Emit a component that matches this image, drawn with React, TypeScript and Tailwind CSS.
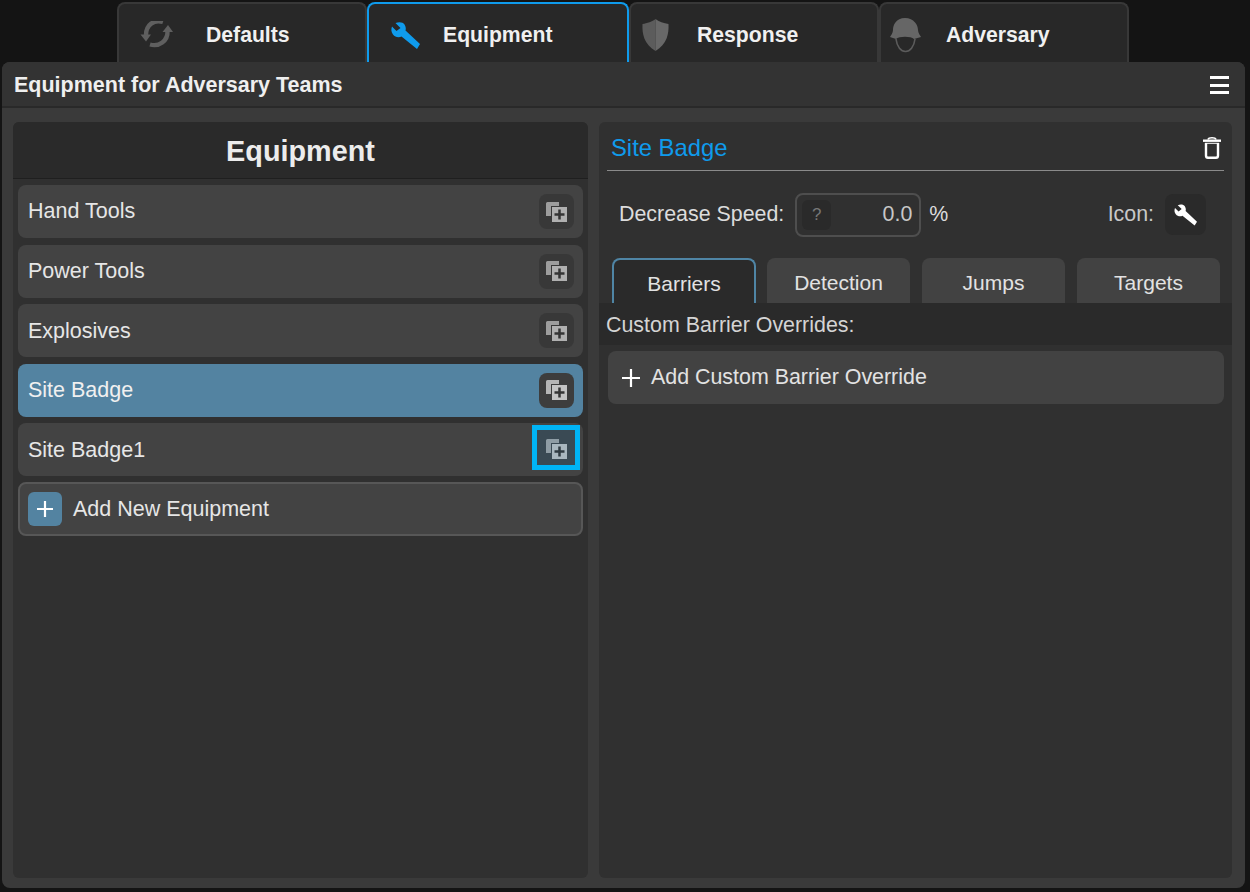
import React from "react";

const equipment = ["Hand Tools", "Power Tools", "Explosives", "Site Badge", "Site Badge1"];

function SyncIcon() {
  return (
    <svg width="33" height="28" viewBox="9 13 33 28" fill="none">
      <path d="M32 14C23 11 15 17 15 27" stroke="#5f5f5f" strokeWidth="4.400" />
      <path d="M9.500 26.500H20L15 33.500Z" fill="#5f5f5f" />
      <path d="M19 36.500C28 39 37 33 36.500 23" stroke="#5f5f5f" strokeWidth="4.400" />
      <path d="M31.500 24H42L37 17Z" fill="#5f5f5f" />
    </svg>
  );
}

function WrenchIcon({ width, height, color }: { width: number; height: number; color: string }) {
  return (
    <svg width={width} height={height} viewBox="9.500 8.500 30 28">
      <path
        d="M14 10C17.500 8.500 21.500 9 23 11.500C24.500 14 24.500 16 24 17.500L38.500 31L35.500 36L20 23.500C17 25 13.500 24 11.500 21.500C9.500 19 9.500 16 10.500 13.500L15 18L19 15Z"
        fill={color}
      />
    </svg>
  );
}

function ShieldIcon() {
  return (
    <svg width="27" height="32" viewBox="0 0 27 32">
      <path d="M13.500 0C10.500 2.500 5 4.500 0.500 5C0 15 2 25 13.500 32Z" fill="#5c5c5c" />
      <path d="M13.500 0C16.500 2.500 22 4.500 26.500 5C27 15 25 25 13.500 32Z" fill="#686868" />
    </svg>
  );
}

function HelmetIcon() {
  return (
    <svg width="33" height="36" viewBox="9 6 33 36" fill="none">
      <path
        d="M25 7C16 7 13 14 13 19C13 22 11 24 10 26L16 28C19 25 31 25 34 28L41 26C40 24 38 22 38 19C38 14 34 7 25 7Z"
        fill="#666666"
      />
      <path d="M16 28C17 36 21 40.500 25.500 40.500C30 40.500 34 36 35 28" stroke="#5c5c5c" strokeWidth="1.600" />
    </svg>
  );
}

function DuplicateIcon({ back, front, plus }: { back: string; front: string; plus: string }) {
  return (
    <svg width="21" height="20" viewBox="0 0 21 20">
      <path d="M1.500 0H13V4H5V14H0V1.500Q0 0 1.500 0Z" fill={back} />
      <rect x="6" y="5" width="15" height="15" fill={front} />
      <path d="M8.500 12.500H18.500M13.500 7.500V17.500" stroke={plus} strokeWidth="2.500" />
    </svg>
  );
}

function TrashIcon() {
  return (
    <svg width="18" height="22" viewBox="0 0 18 22" fill="none">
      <path d="M0 3.700H18" stroke="#ffffff" strokeWidth="2.400" />
      <path d="M5 2.500C5.500 1 7 0.800 9 0.800C11 0.800 12.500 1 13 2.500" stroke="#ffffff" strokeWidth="1.600" />
      <path d="M3 6V18.500Q3 20.800 5 20.800H13Q15 20.800 15 18.500V6" stroke="#ffffff" strokeWidth="2.400" />
      <path d="M2 6.300H16" stroke="#ffffff" strokeWidth="1" />
    </svg>
  );
}

function TopTab({
  label,
  icon,
  active,
  className,
}: {
  label: string;
  icon: React.ReactNode;
  active?: boolean;
  className: string;
}) {
  return (
    <div
      className={`flex h-[60px] items-center rounded-t-[8px] border-2 border-b-0 bg-[#282828] pt-[4px] ${className} ${
        active ? "border-[#0f9bec]" : "border-[#383838]"
      }`}
    >
      {icon}
      <span className="text-[21.200px] font-bold text-[#f0f0f0]">{label}</span>
    </div>
  );
}

function InnerTab({ label, active }: { label: string; active?: boolean }) {
  return (
    <div
      className={`flex h-[45px] items-center justify-center rounded-t-[8px] pt-[4px] text-[21px] text-[#e2e2e2] ${
        active ? "w-[144px] border-2 border-b-0 border-[#4f85a5] bg-[#2a2a2a]" : "w-[143px] bg-[#424242]"
      }`}
    >
      {label}
    </div>
  );
}

export default function App() {
  return (
    <div className="flex h-[892px] w-[1250px] flex-col overflow-hidden bg-[#141414] pt-[2px] font-['Liberation_Sans',Arial,sans-serif]">
      <div className="ml-[117px] flex">
        <TopTab label="Defaults" className="w-[250px] gap-[33px] pl-[21px]" icon={<SyncIcon />} />
        <TopTab
          label="Equipment"
          className="w-[262px] gap-[22px] pl-[22px]"
          active
          icon={<WrenchIcon width={30} height={29} color="#0f9bec" />}
        />
        <TopTab label="Response" className="w-[250px] gap-[28px] pl-[11px]" icon={<ShieldIcon />} />
        <TopTab label="Adversary" className="w-[250px] gap-[24px] pl-[8px]" icon={<HelmetIcon />} />
      </div>

      <div className="ml-[2px] flex h-[826px] w-[1243px] flex-col rounded-[8px] bg-[#3a3a3a]">
        <div className="flex h-[46px] shrink-0 items-center justify-between rounded-t-[8px] border-b-2 border-[#292929] bg-[#333333] pl-[12px] pr-[16px] pt-[2px]">
          <span className="text-[21.500px] font-bold text-[#efefef]">Equipment for Adversary Teams</span>
          <div className="flex w-[19px] flex-col gap-[4.500px]">
            <div className="h-[3px] bg-white" />
            <div className="h-[3px] bg-white" />
            <div className="h-[3px] bg-white" />
          </div>
        </div>

        <div className="flex gap-[11px] pl-[11px] pt-[14px]">
          <div className="flex h-[756px] w-[575px] flex-col rounded-[6px] bg-[#303030]">
            <div className="flex h-[57px] shrink-0 items-center justify-center rounded-t-[6px] border-b border-[#1f1f1f] bg-[#2a2a2a] pt-[3px] text-[28.800px] font-bold text-[#ececec]">
              Equipment
            </div>
            <div className="flex flex-col gap-[6.600px] px-[5px] pt-[6px]">
              {equipment.map((name) => {
                const selected = name === "Site Badge";
                const focused = name === "Site Badge1";
                return (
                  <div
                    key={name}
                    className={`flex h-[53px] items-center justify-between rounded-[8px] pl-[10px] pr-[9px] text-[21.500px] ${
                      selected ? "bg-[#5383a1] text-[#f0f0f0]" : "bg-[#434343] text-[#e6e6e6]"
                    }`}
                  >
                    <span>{name}</span>
                    {focused ? (
                      <div className="-mr-[6px] -mt-[4px] flex h-[45px] w-[48px] items-center justify-center border-[5px] border-[#00b4f6] bg-[#3a4a54] pt-[3px]">
                        <DuplicateIcon back="#8f9da5" front="#a9b7bf" plus="#2f3b42" />
                      </div>
                    ) : (
                      <div
                        className={`flex h-[35px] w-[35px] items-center justify-center rounded-[8px] ${
                          selected ? "bg-[#3d3d3d]" : "bg-[#383838]"
                        }`}
                      >
                        <DuplicateIcon
                          back={selected ? "#b5b5b5" : "#9d9d9d"}
                          front={selected ? "#c4c4c4" : "#b0b0b0"}
                          plus="#353535"
                        />
                      </div>
                    )}
                  </div>
                );
              })}
              <div className="-mt-[1px] flex h-[54px] items-center gap-[11px] rounded-[8px] border-2 border-[#575757] bg-[#434343] pl-[8px] text-[21.500px] text-[#e6e6e6]">
                <div className="flex h-[34px] w-[34px] items-center justify-center rounded-[6px] bg-[#5383a1]">
                  <svg width="16" height="16" viewBox="0 0 16 16">
                    <path d="M0 8H16M8 0V16" stroke="#ffffff" strokeWidth="2.200" />
                  </svg>
                </div>
                <span>Add New Equipment</span>
              </div>
            </div>
          </div>

          <div className="flex h-[756px] w-[633px] flex-col rounded-[6px] bg-[#303030]">
            <div className="mx-[8px] flex h-[49px] shrink-0 items-center justify-between border-b border-[#8a8a8a] pl-[4px] pr-[3px] pt-[4px]">
              <span className="text-[23.800px] text-[#0f9bec]">Site Badge</span>
              <TrashIcon />
            </div>

            <div className="flex h-[87px] shrink-0 items-center justify-between pl-[20px] pr-[26px]">
              <div className="flex items-center text-[21.400px] text-[#dcdcdc]">
                <span>Decrease Speed:</span>
                <div className="ml-[11px] flex h-[44px] w-[126px] items-center justify-between rounded-[8px] border-2 border-[#4e4e4e] pl-[5px] pr-[7px]">
                  <div className="flex h-[30px] w-[29px] items-center justify-center rounded-[6px] bg-[#2a2a2a] text-[17px] text-[#777777]">
                    ?
                  </div>
                  <span className="text-[#c8c8c8]">0.0</span>
                </div>
                <span className="ml-[8px]">%</span>
              </div>
              <div className="flex items-center gap-[11px] text-[21.400px] text-[#c8c8c8]">
                <span>Icon:</span>
                <div className="flex h-[41px] w-[41px] items-center justify-center rounded-[8px] bg-[#2a2a2a]">
                  <WrenchIcon width={24} height={22} color="#ffffff" />
                </div>
              </div>
            </div>

            <div className="flex h-[45px] shrink-0 pl-[13px]">
              <InnerTab label="Barriers" active />
              <div className="ml-[11px] flex gap-[12px]">
                <InnerTab label="Detection" />
                <InnerTab label="Jumps" />
                <InnerTab label="Targets" />
              </div>
            </div>

            <div className="flex h-[42px] shrink-0 items-center bg-[#2a2a2a] pl-[7px] pt-[2px] text-[21.400px] text-[#d4d4d4]">
              Custom Barrier Overrides:
            </div>

            <div className="ml-[9px] mr-[8px] mt-[6px] flex h-[53px] shrink-0 items-center gap-[11px] rounded-[8px] bg-[#424242] pl-[14px] text-[21.400px] text-[#e2e2e2]">
              <svg width="18" height="18" viewBox="0 0 18 18">
                <path d="M0 9H18M9 0V18" stroke="#ffffff" strokeWidth="2.200" />
              </svg>
              <span>Add Custom Barrier Override</span>
            </div>
          </div>
        </div>
      </div>
    </div>
  );
}
